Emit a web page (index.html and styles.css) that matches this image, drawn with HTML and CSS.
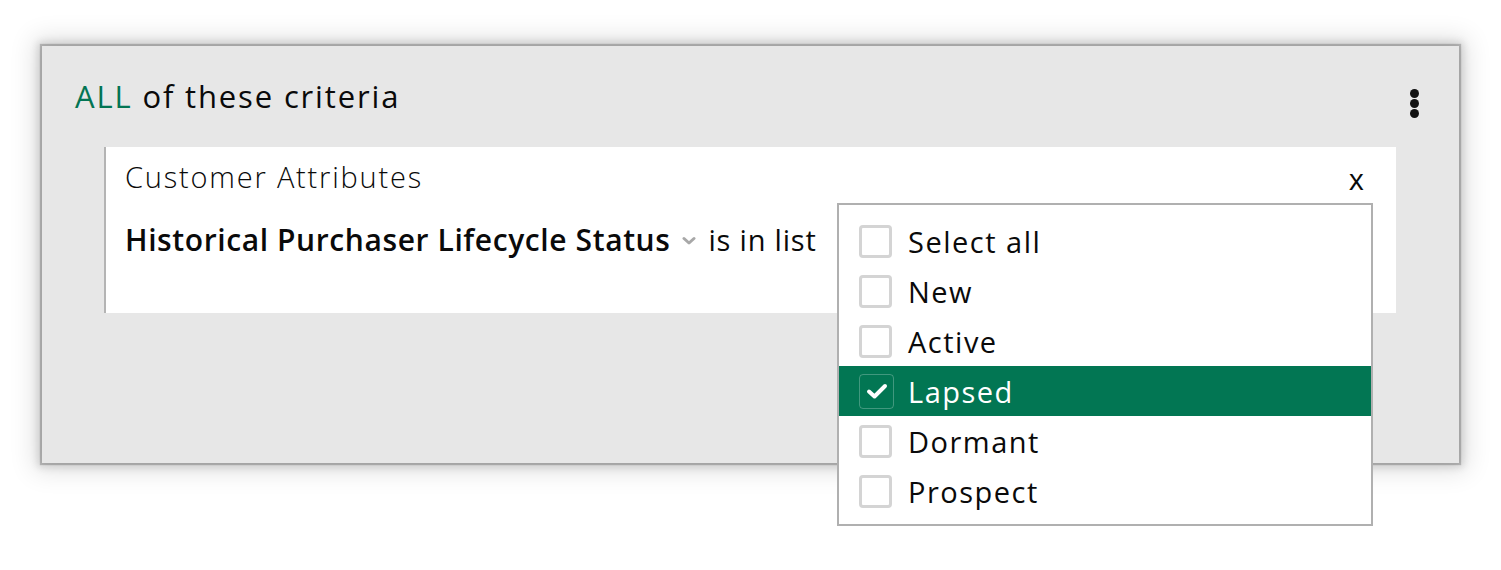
FILE: index.html
```html
<!DOCTYPE html>
<html lang="en">
<head>
    <meta charset="UTF-8">
    <title>Criteria</title>
    <link rel="stylesheet" href="styles.css">
</head>
<body>
    <div class="group">
        <div class="group-head">
            <div class="group-title"><span class="all">ALL</span> of these criteria</div>
            <div class="more">
                <span></span><span></span><span></span>
            </div>
        </div>
        <div class="card">
            <div class="card-head">
                <div class="card-title">Customer Attributes</div>
                <div class="close">x</div>
            </div>
            <div class="rule">
                <span class="field">Historical Purchaser Lifecycle Status</span>
                <svg class="chev" width="14" height="10" viewBox="0 0 14 10"><path d="M2 2.5 L7 7 L12 2.5" fill="none" stroke="#a8a8a8" stroke-width="3" stroke-linecap="round" stroke-linejoin="round"/></svg>
                <span class="op">is in list</span>
            </div>
        </div>
        <div class="dropdown">
            <div class="opt"><span class="box"></span>Select all</div>
            <div class="opt"><span class="box"></span>New</div>
            <div class="opt"><span class="box"></span>Active</div>
            <div class="opt selected">
                <span class="box">
                    <svg width="22" height="18" viewBox="0 0 22 18"><path d="M3 9.5 L8.5 14.5 L19 4" fill="none" stroke="#fff" stroke-width="4" stroke-linecap="round" stroke-linejoin="round"/></svg>
                </span>Lapsed
            </div>
            <div class="opt"><span class="box"></span>Dormant</div>
            <div class="opt"><span class="box"></span>Prospect</div>
        </div>
    </div>
</body>
</html>
```
FILE: styles.css
```css
html, body {
    height: 570px;
}
body {
    margin: 0;
    padding: 0;
    overflow: hidden;
    background-color: #fff;
    font-family: "Open Sans", "Noto Sans", sans-serif;
    color: #0a0a0a;
}
.group {
    position: relative;
    box-sizing: border-box;
    width: 1417px;
    height: 417px;
    margin: 46px 0 0 42px;
    padding: 30px 40px 0 33px;
    background-color: #e7e7e7;
    box-shadow: 0 0 1px 2px rgba(0, 0, 0, 0.2), 0 0 8px 4px rgba(0, 0, 0, 0.14), 0 0 24px 8px rgba(0, 0, 0, 0.12);
}
.group-head {
    display: flex;
    justify-content: space-between;
    align-items: center;
    height: 44px;
}
.group-title {
    font-size: 31px;
    letter-spacing: 1.85px;
    margin-top: -4px;
}
.all {
    color: #037553;
}
.more {
    display: flex;
    flex-direction: column;
    gap: 1px;
    margin-top: 10px;
}
.more span {
    width: 9px;
    height: 9px;
    border-radius: 50%;
    background-color: #111;
}
.card {
    box-sizing: border-box;
    height: 166px;
    margin: 27px 23px 0 29px;
    padding: 12px 32px 0 19px;
    background-color: #fff;
    border-left: 2px solid #b4b4b4;
}
.card-head {
    display: flex;
    justify-content: space-between;
    align-items: center;
    height: 38px;
}
.card-title {
    font-size: 29px;
    font-weight: 300;
    letter-spacing: 1.8px;
    margin-top: -3px;
}
.close {
    font-size: 29px;
}
.rule {
    display: flex;
    align-items: center;
    margin-top: 23px;
    height: 38px;
}
.field {
    font-size: 30px;
    font-weight: 600;
    letter-spacing: 0.6px;
}
.chev {
    margin: 4px 13px 0 11px;
}
.op {
    font-size: 29px;
    letter-spacing: 0.8px;
}
.dropdown {
    position: absolute;
    left: 795px;
    top: 157px;
    box-sizing: border-box;
    width: 536px;
    height: 323px;
    padding: 11px 0 0 0;
    background-color: #fff;
    border: 2px solid #b0b0b0;
}
.opt {
    display: flex;
    align-items: center;
    height: 50px;
    padding-left: 20px;
    font-size: 29px;
    letter-spacing: 1.5px;
}
.box {
    display: flex;
    align-items: center;
    justify-content: center;
    box-sizing: border-box;
    width: 33px;
    height: 33px;
    margin-right: 16px;
    border: 3px solid #d4d4d4;
    border-radius: 4px;
}
.selected {
    background-color: #027653;
    color: #fff;
}
.selected .box {
    width: 35px;
    height: 35px;
    margin-right: 14px;
    border: 1px solid rgba(255, 255, 255, 0.25);
}
```
